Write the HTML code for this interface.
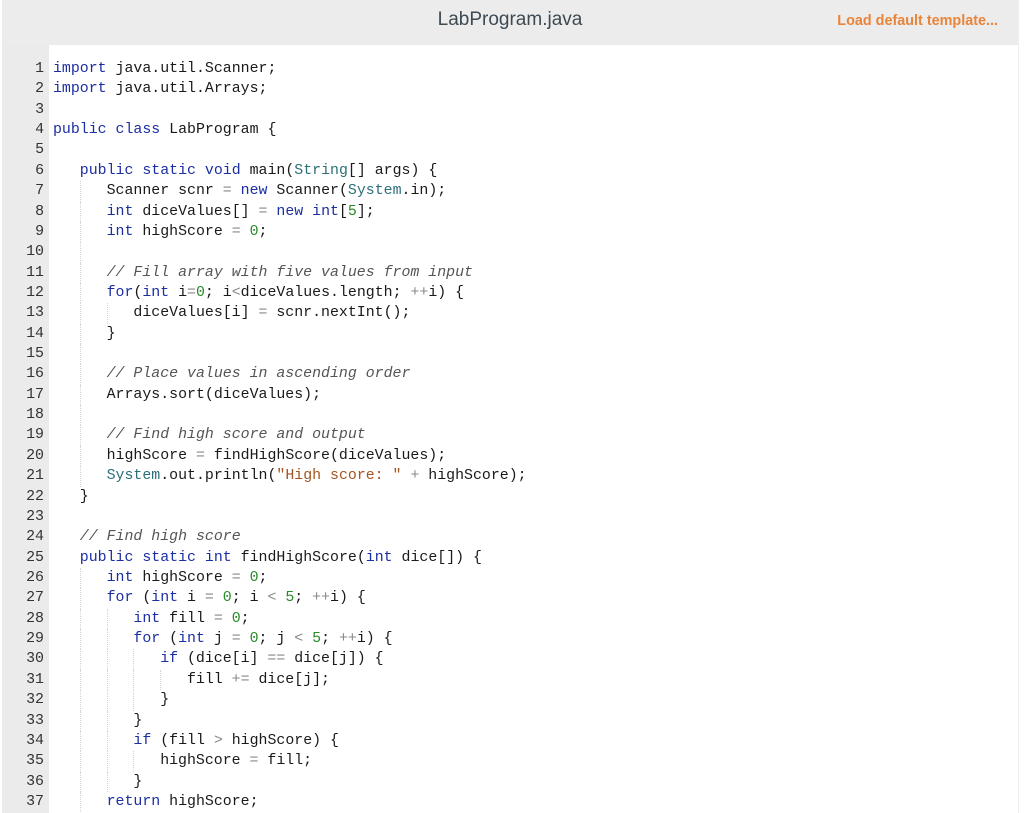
<!DOCTYPE html>
<html><head><meta charset="utf-8"><style>
body{margin:0;background:#fff;width:1024px;height:813px;overflow:hidden;font-family:"Liberation Sans",sans-serif}
.panel{position:absolute;left:2px;top:0;width:1016px;height:813px;border-right:1px solid #eee;overflow:hidden}
.hdr{height:45px;background:#ececec;position:relative}
.title{position:absolute;left:0;right:0;top:9px;text-align:center;font-size:19px;color:#3d4a52}
.load{position:absolute;right:20px;top:13px;font-size:14.4px;font-weight:bold;color:#e8853a}
.gut{position:absolute;left:0;top:45px;width:47px;height:768px;background:#ebebeb}
.code{position:absolute;left:0;top:59px;font-family:"Liberation Mono",monospace;font-size:14.9px;line-height:20.36px;color:#1a1a1a;white-space:pre}
.code>div{height:20.36px;overflow:hidden}
.ln{display:inline-block;width:42px;text-align:right;color:#333;margin-right:9px}
.i{display:inline-block;width:26.8px;height:20.36px;vertical-align:top;box-sizing:border-box}
.g{border-left:1px dotted #d4d4d4}
.k{color:#1c2ea3}.t{color:#2b6f78}.n{color:#2a8a2a}.s{color:#a5541f}.c{color:#555;font-style:italic}.o{color:#888}
</style></head><body>
<div class="panel">
<div class="hdr"><div class="title">LabProgram.java</div><div class="load">Load default template...</div></div>
<div class="gut"></div>
<div class="code"><div><span class="ln">1</span><span class="k">import</span> java.util.Scanner;</div><div><span class="ln">2</span><span class="k">import</span> java.util.Arrays;</div><div><span class="ln">3</span></div><div><span class="ln">4</span><span class="k">public class</span> LabProgram {</div><div><span class="ln">5</span></div><div><span class="ln">6</span><span class="i"></span><span class="k">public static void</span> main(<span class="t">String</span>[] args) {</div><div><span class="ln">7</span><span class="i"></span><span class="i g"></span>Scanner scnr <span class="o">=</span> <span class="k">new</span> Scanner(<span class="t">System</span>.in);</div><div><span class="ln">8</span><span class="i"></span><span class="i g"></span><span class="k">int</span> diceValues[] <span class="o">=</span> <span class="k">new int</span>[<span class="n">5</span>];</div><div><span class="ln">9</span><span class="i"></span><span class="i g"></span><span class="k">int</span> highScore <span class="o">=</span> <span class="n">0</span>;</div><div><span class="ln">10</span><span class="i"></span><span class="i g"></span></div><div><span class="ln">11</span><span class="i"></span><span class="i g"></span><span class="c">// Fill array with five values from input</span></div><div><span class="ln">12</span><span class="i"></span><span class="i g"></span><span class="k">for</span>(<span class="k">int</span> i<span class="o">=</span><span class="n">0</span>; i<span class="o">&lt;</span>diceValues.length; <span class="o">++</span>i) {</div><div><span class="ln">13</span><span class="i"></span><span class="i g"></span><span class="i g"></span>diceValues[i] <span class="o">=</span> scnr.nextInt();</div><div><span class="ln">14</span><span class="i"></span><span class="i g"></span>}</div><div><span class="ln">15</span><span class="i"></span><span class="i g"></span></div><div><span class="ln">16</span><span class="i"></span><span class="i g"></span><span class="c">// Place values in ascending order</span></div><div><span class="ln">17</span><span class="i"></span><span class="i g"></span>Arrays.sort(diceValues);</div><div><span class="ln">18</span><span class="i"></span><span class="i g"></span></div><div><span class="ln">19</span><span class="i"></span><span class="i g"></span><span class="c">// Find high score and output</span></div><div><span class="ln">20</span><span class="i"></span><span class="i g"></span>highScore <span class="o">=</span> findHighScore(diceValues);</div><div><span class="ln">21</span><span class="i"></span><span class="i g"></span><span class="t">System</span>.out.println(<span class="s">"High score: "</span> <span class="o">+</span> highScore);</div><div><span class="ln">22</span><span class="i"></span>}</div><div><span class="ln">23</span><span class="i"></span></div><div><span class="ln">24</span><span class="i"></span><span class="c">// Find high score</span></div><div><span class="ln">25</span><span class="i"></span><span class="k">public static int</span> findHighScore(<span class="k">int</span> dice[]) {</div><div><span class="ln">26</span><span class="i"></span><span class="i g"></span><span class="k">int</span> highScore <span class="o">=</span> <span class="n">0</span>;</div><div><span class="ln">27</span><span class="i"></span><span class="i g"></span><span class="k">for</span> (<span class="k">int</span> i <span class="o">=</span> <span class="n">0</span>; i <span class="o">&lt;</span> <span class="n">5</span>; <span class="o">++</span>i) {</div><div><span class="ln">28</span><span class="i"></span><span class="i g"></span><span class="i g"></span><span class="k">int</span> fill <span class="o">=</span> <span class="n">0</span>;</div><div><span class="ln">29</span><span class="i"></span><span class="i g"></span><span class="i g"></span><span class="k">for</span> (<span class="k">int</span> j <span class="o">=</span> <span class="n">0</span>; j <span class="o">&lt;</span> <span class="n">5</span>; <span class="o">++</span>i) {</div><div><span class="ln">30</span><span class="i"></span><span class="i g"></span><span class="i g"></span><span class="i g"></span><span class="k">if</span> (dice[i] <span class="o">==</span> dice[j]) {</div><div><span class="ln">31</span><span class="i"></span><span class="i g"></span><span class="i g"></span><span class="i g"></span><span class="i g"></span>fill <span class="o">+=</span> dice[j];</div><div><span class="ln">32</span><span class="i"></span><span class="i g"></span><span class="i g"></span><span class="i g"></span>}</div><div><span class="ln">33</span><span class="i"></span><span class="i g"></span><span class="i g"></span>}</div><div><span class="ln">34</span><span class="i"></span><span class="i g"></span><span class="i g"></span><span class="k">if</span> (fill <span class="o">&gt;</span> highScore) {</div><div><span class="ln">35</span><span class="i"></span><span class="i g"></span><span class="i g"></span><span class="i g"></span>highScore <span class="o">=</span> fill;</div><div><span class="ln">36</span><span class="i"></span><span class="i g"></span><span class="i g"></span>}</div><div><span class="ln">37</span><span class="i"></span><span class="i g"></span><span class="k">return</span> highScore;</div></div>
</div>
</body></html>
